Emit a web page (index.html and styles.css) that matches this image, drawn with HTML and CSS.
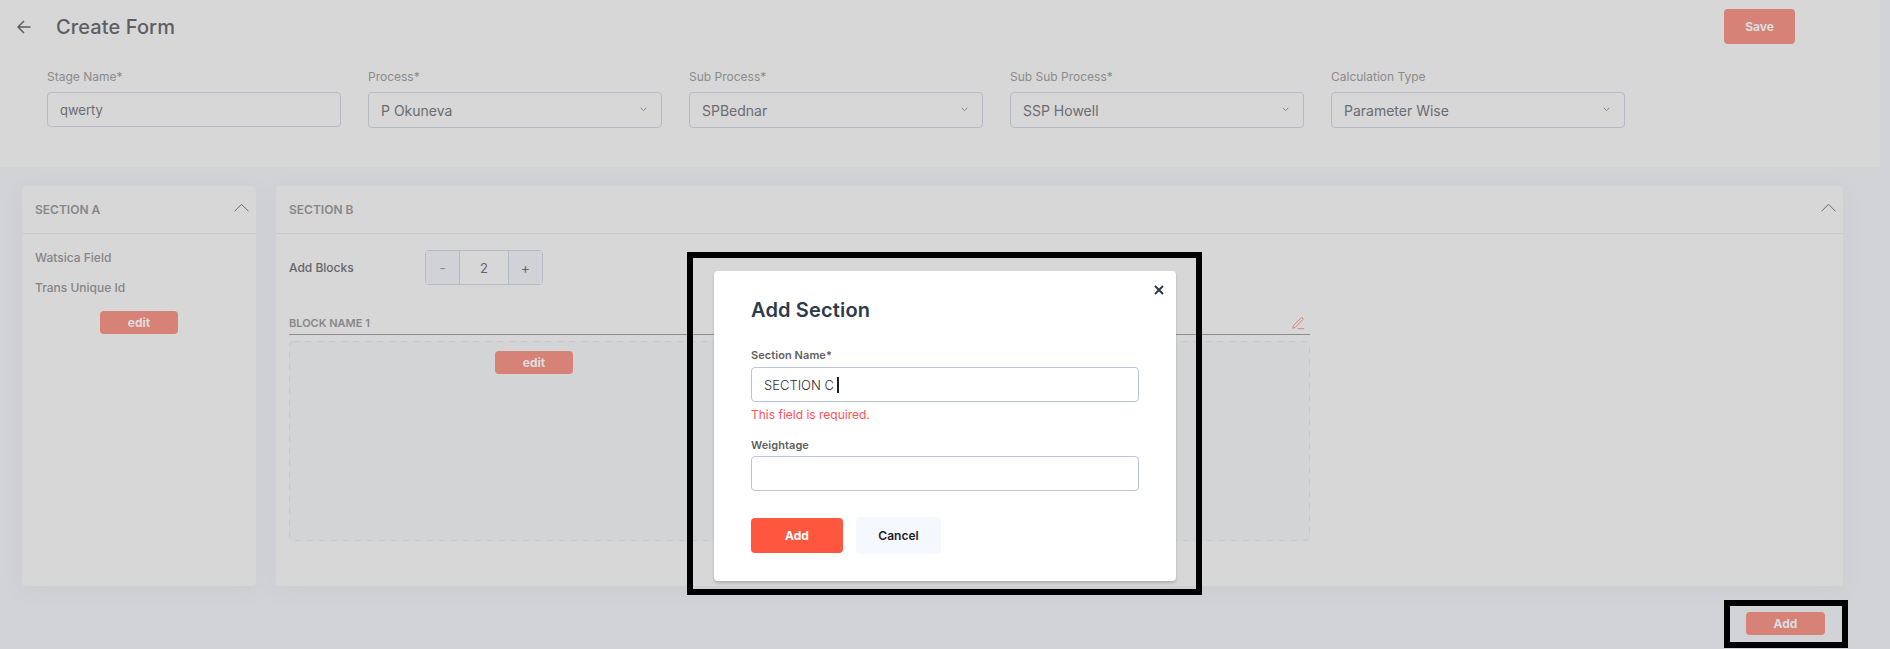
FILE: index.html
```html
<!DOCTYPE html>
<html lang="en">
<head>
  <meta charset="UTF-8" />
  <title>Create Form</title>
  <link rel="stylesheet" href="styles.css">
</head>
<body>
  <header class="form-header">
    <div class="title-row">
      <svg class="back" width="14" height="14" viewBox="0 0 14 14"><path d="M13.5 7H1M7 1L1 7l6 6" /></svg>
      <h1>Create Form</h1>
      <button class="btn save">Save</button>
    </div>
    <div class="fields">
      <div class="field">
        <label>Stage Name*</label>
        <input class="control" type="text" value="qwerty" />
      </div>
      <div class="field">
        <label>Process*</label>
        <div class="control select">P Okuneva <svg width="7" height="5" viewBox="0 0 7 5"><path d="M.7 .8l2.8 2.8L6.3 .8" /></svg></div>
      </div>
      <div class="field">
        <label>Sub Process*</label>
        <div class="control select">SPBednar <svg width="7" height="5" viewBox="0 0 7 5"><path d="M.7 .8l2.8 2.8L6.3 .8" /></svg></div>
      </div>
      <div class="field">
        <label>Sub Sub Process*</label>
        <div class="control select">SSP Howell <svg width="7" height="5" viewBox="0 0 7 5"><path d="M.7 .8l2.8 2.8L6.3 .8" /></svg></div>
      </div>
      <div class="field">
        <label>Calculation Type</label>
        <div class="control select">Parameter Wise <svg width="7" height="5" viewBox="0 0 7 5"><path d="M.7 .8l2.8 2.8L6.3 .8" /></svg></div>
      </div>
    </div>
  </header>

  <main class="sections">
    <section class="card card-a">
      <div class="card-head">
        <h2>SECTION A</h2>
        <svg width="15" height="9" viewBox="0 0 15 9"><path d="M.5 8.3l7-7 7 7" /></svg>
      </div>
      <p class="item">Watsica Field</p>
      <p class="item">Trans Unique Id</p>
      <button class="btn small">edit</button>
    </section>

    <section class="card card-b">
      <div class="card-head">
        <h2>SECTION B</h2>
        <svg width="15" height="9" viewBox="0 0 15 9"><path d="M.5 8.3l7-7 7 7" /></svg>
      </div>
      <div class="blocks-row">
        <span class="blocks-label">Add Blocks</span>
        <div class="stepper">
          <span class="step minus">-</span>
          <span class="count">2</span>
          <span class="step">+</span>
        </div>
      </div>
      <div class="block">
        <div class="block-head">
          <h3>BLOCK NAME 1</h3>
          <svg width="13" height="13" viewBox="0 0 13 13"><path d="M.8 11.2l.6-2.7L9.2 .8q.8-.5 1.5.1.8.8.1 1.6L3.2 10.4zM5.8 11.7H12.3" /></svg>
        </div>
        <div class="drop">
          <svg class="dashes" width="1021" height="200"><rect x=".5" y=".5" width="1020" height="199" rx="4" /></svg>
          <button class="btn small">edit</button>
        </div>
      </div>
    </section>
  </main>

  <footer class="footer">
    <div class="highlight">
      <button class="btn small">Add</button>
    </div>
  </footer>

  <div class="modal-frame">
    <div class="modal">
      <svg class="close" width="10" height="10" viewBox="0 0 10 10"><path d="M1 1l8 8M9 1L1 9" /></svg>
      <h2>Add Section</h2>
      <label>Section Name*</label>
      <div class="modal-input">SECTION C<span class="caret"></span></div>
      <p class="error">This field is required.</p>
      <label>Weightage</label>
      <div class="modal-input"></div>
      <div class="actions">
        <button class="btn add">Add</button>
        <button class="btn cancel">Cancel</button>
      </div>
    </div>
  </div>
</body>
</html>
```

FILE: styles.css
```css
* {
  box-sizing: border-box;
}
body {
  margin: 0;
  height: 649px;
  overflow: hidden;
  background: #d2d3d7;
  font-family: Inter, "Liberation Sans", sans-serif;
  font-size: 13px;
  color: #64646c;
}
h1, h2, h3, p {
  margin: 0;
}
svg {
  fill: none;
  stroke: #68686b;
  flex: none;
}
.btn {
  border: none;
  border-radius: 4px;
  padding: 0;
  background: #d68277;
  color: #dddde0;
  font: 700 12px Inter, sans-serif;
}
.small {
  width: 78px;
  height: 23px;
}

/* header */
.form-header {
  width: 1880px;
  height: 167px;
  background: #d7d7d7;
}
.title-row {
  display: flex;
  align-items: center;
  height: 53px;
  padding: 0 85px 0 17px;
}
.back {
  stroke: #5c5c5e;
  stroke-width: 1.5;
}
h1 {
  margin-left: 25px;
  font-size: 20px;
  font-weight: 500;
  letter-spacing: 0.1px;
  color: #5e5e65;
}
.save {
  width: 71px;
  height: 35px;
  margin-left: auto;
}
.fields {
  display: flex;
  gap: 27px;
  padding: 15px 0 0 47px;
}
.field {
  width: 294px;
}
.field label {
  display: block;
  height: 24px;
  line-height: 18px;
  font-size: 12px;
  color: #8b8b8c;
}
.control {
  display: flex;
  width: 100%;
  height: 35px;
  padding: 1px 12px 0;
  border: 1px solid #b6bac4;
  border-radius: 4px;
  background: none;
  color: #6b6b71;
  font: 13px Inter, sans-serif;
}
.select {
  height: 36px;
  align-items: center;
  justify-content: space-between;
  padding: 0 14px 0 12px;
  font-size: 14px;
}
.select svg {
  margin-top: -1px;
  stroke: #858589;
}

/* section cards */
.sections {
  display: flex;
  gap: 20px;
  padding: 19px 47px 0 22px;
}
.card {
  height: 400px;
  border-radius: 4px;
  background: #d7d7d7;
  box-shadow: 0 4px 20px rgba(120, 125, 145, 0.08);
}
.card-a {
  width: 234px;
}
.card-b {
  width: 1567px;
}
.card-head {
  display: flex;
  justify-content: space-between;
  height: 48px;
  padding: 16px 7px 0 13px;
  border-bottom: 1px solid #cbcbcd;
}
.card-head h2 {
  font-size: 12px;
  line-height: 16px;
  font-weight: 600;
  color: #87878a;
}
.card-head svg {
  margin-top: 1px;
}
.item {
  margin-left: 13px;
  height: 30px;
  line-height: 16px;
  font-size: 12px;
  font-weight: 500;
  color: #858588;
}
.card-head + .item {
  margin-top: 16px;
}
.card-a .btn {
  display: block;
  margin: 1px 0 0 78px;
}
.blocks-row {
  display: flex;
  align-items: center;
  padding: 16px 0 0 13px;
}
.blocks-label {
  width: 136px;
  font-size: 12px;
  font-weight: 500;
}
.stepper {
  display: flex;
  width: 118px;
  height: 35px;
  border: 1px solid #b6bac4;
  border-radius: 4px;
  line-height: 33px;
  font-size: 14px;
  text-align: center;
}
.step {
  width: 33px;
  background: #d0d2d7;
}
.minus {
  color: #8b8b8f;
}
.count {
  flex: 1;
  border: 1px solid #b6bac4;
  border-width: 0 1px;
  font-size: 13px;
  line-height: 35px;
}
.block {
  width: 1021px;
  margin: 30px 0 0 13px;
}
.block-head {
  display: flex;
  justify-content: space-between;
  height: 20px;
  padding-right: 5px;
  border-bottom: 1px solid #8c8c8e;
}
.block-head h3 {
  font-size: 11px;
  line-height: 16px;
  font-weight: 600;
  color: #87878a;
}
.block-head svg {
  margin-top: 2px;
  stroke: #dc817a;
}
.drop {
  position: relative;
  height: 200px;
  margin-top: 6px;
  padding: 10px 0 0 206px;
  border-radius: 4px;
  background: #d3d4d6;
}
.drop .btn {
  display: block;
}
.dashes {
  position: absolute;
  left: 0;
  top: 0;
  stroke: #c5c7cd;
  stroke-dasharray: 6 6;
}

.footer {
  display: flex;
  justify-content: flex-end;
  padding: 14px 42px 0 0;
}
.highlight {
  width: 124px;
  height: 48px;
  padding: 6px 0 0 16px;
  border: 6px solid #000;
}
.highlight .btn {
  display: block;
  width: 79px;
}

/* modal */
.modal-frame {
  position: absolute;
  left: 687px;
  top: 252px;
  width: 515px;
  height: 343px;
  padding: 13px 20px 0 21px;
  border: 6px solid #000;
}
.modal {
  position: relative;
  height: 310px;
  padding: 26px 37px 0;
  border-radius: 4px;
  background: #fff;
  box-shadow: 0 2px 3px rgba(0, 0, 0, 0.18);
}
.close {
  position: absolute;
  right: 12px;
  top: 14px;
  stroke: #2c3a4b;
  stroke-width: 2;
}
.modal h2 {
  height: 50px;
  font-size: 20px;
  line-height: 26px;
  font-weight: 600;
  letter-spacing: 0.15px;
  color: #2c3a4b;
}
.modal label {
  display: block;
  height: 20px;
  line-height: 16px;
  font-size: 11px;
  font-weight: 600;
  letter-spacing: 0.07px;
  color: #5f5f61;
}
.modal-input {
  display: flex;
  align-items: center;
  height: 35px;
  padding: 1px 0 0 12px;
  border: 1px solid #bcc5d5;
  border-radius: 4px;
  color: #2e2e33;
  font-weight: 300;
}
.caret {
  width: 2px;
  height: 16px;
  margin: -1px 0 0 3px;
  background: #1d1f24;
}
.error {
  height: 35px;
  padding-top: 5px;
  line-height: 16px;
  font-size: 12px;
  color: #ff5353;
}
.error + label {
  height: 19px;
}
.actions {
  display: flex;
  align-items: center;
  gap: 13px;
  margin-top: 26px;
}
.add {
  width: 92px;
  height: 35px;
  background: #ff573f;
  color: #fff;
}
.cancel {
  width: 85px;
  height: 37px;
  background: #f5f8fe;
  color: #1f1f2b;
  font-weight: 600;
}
```
